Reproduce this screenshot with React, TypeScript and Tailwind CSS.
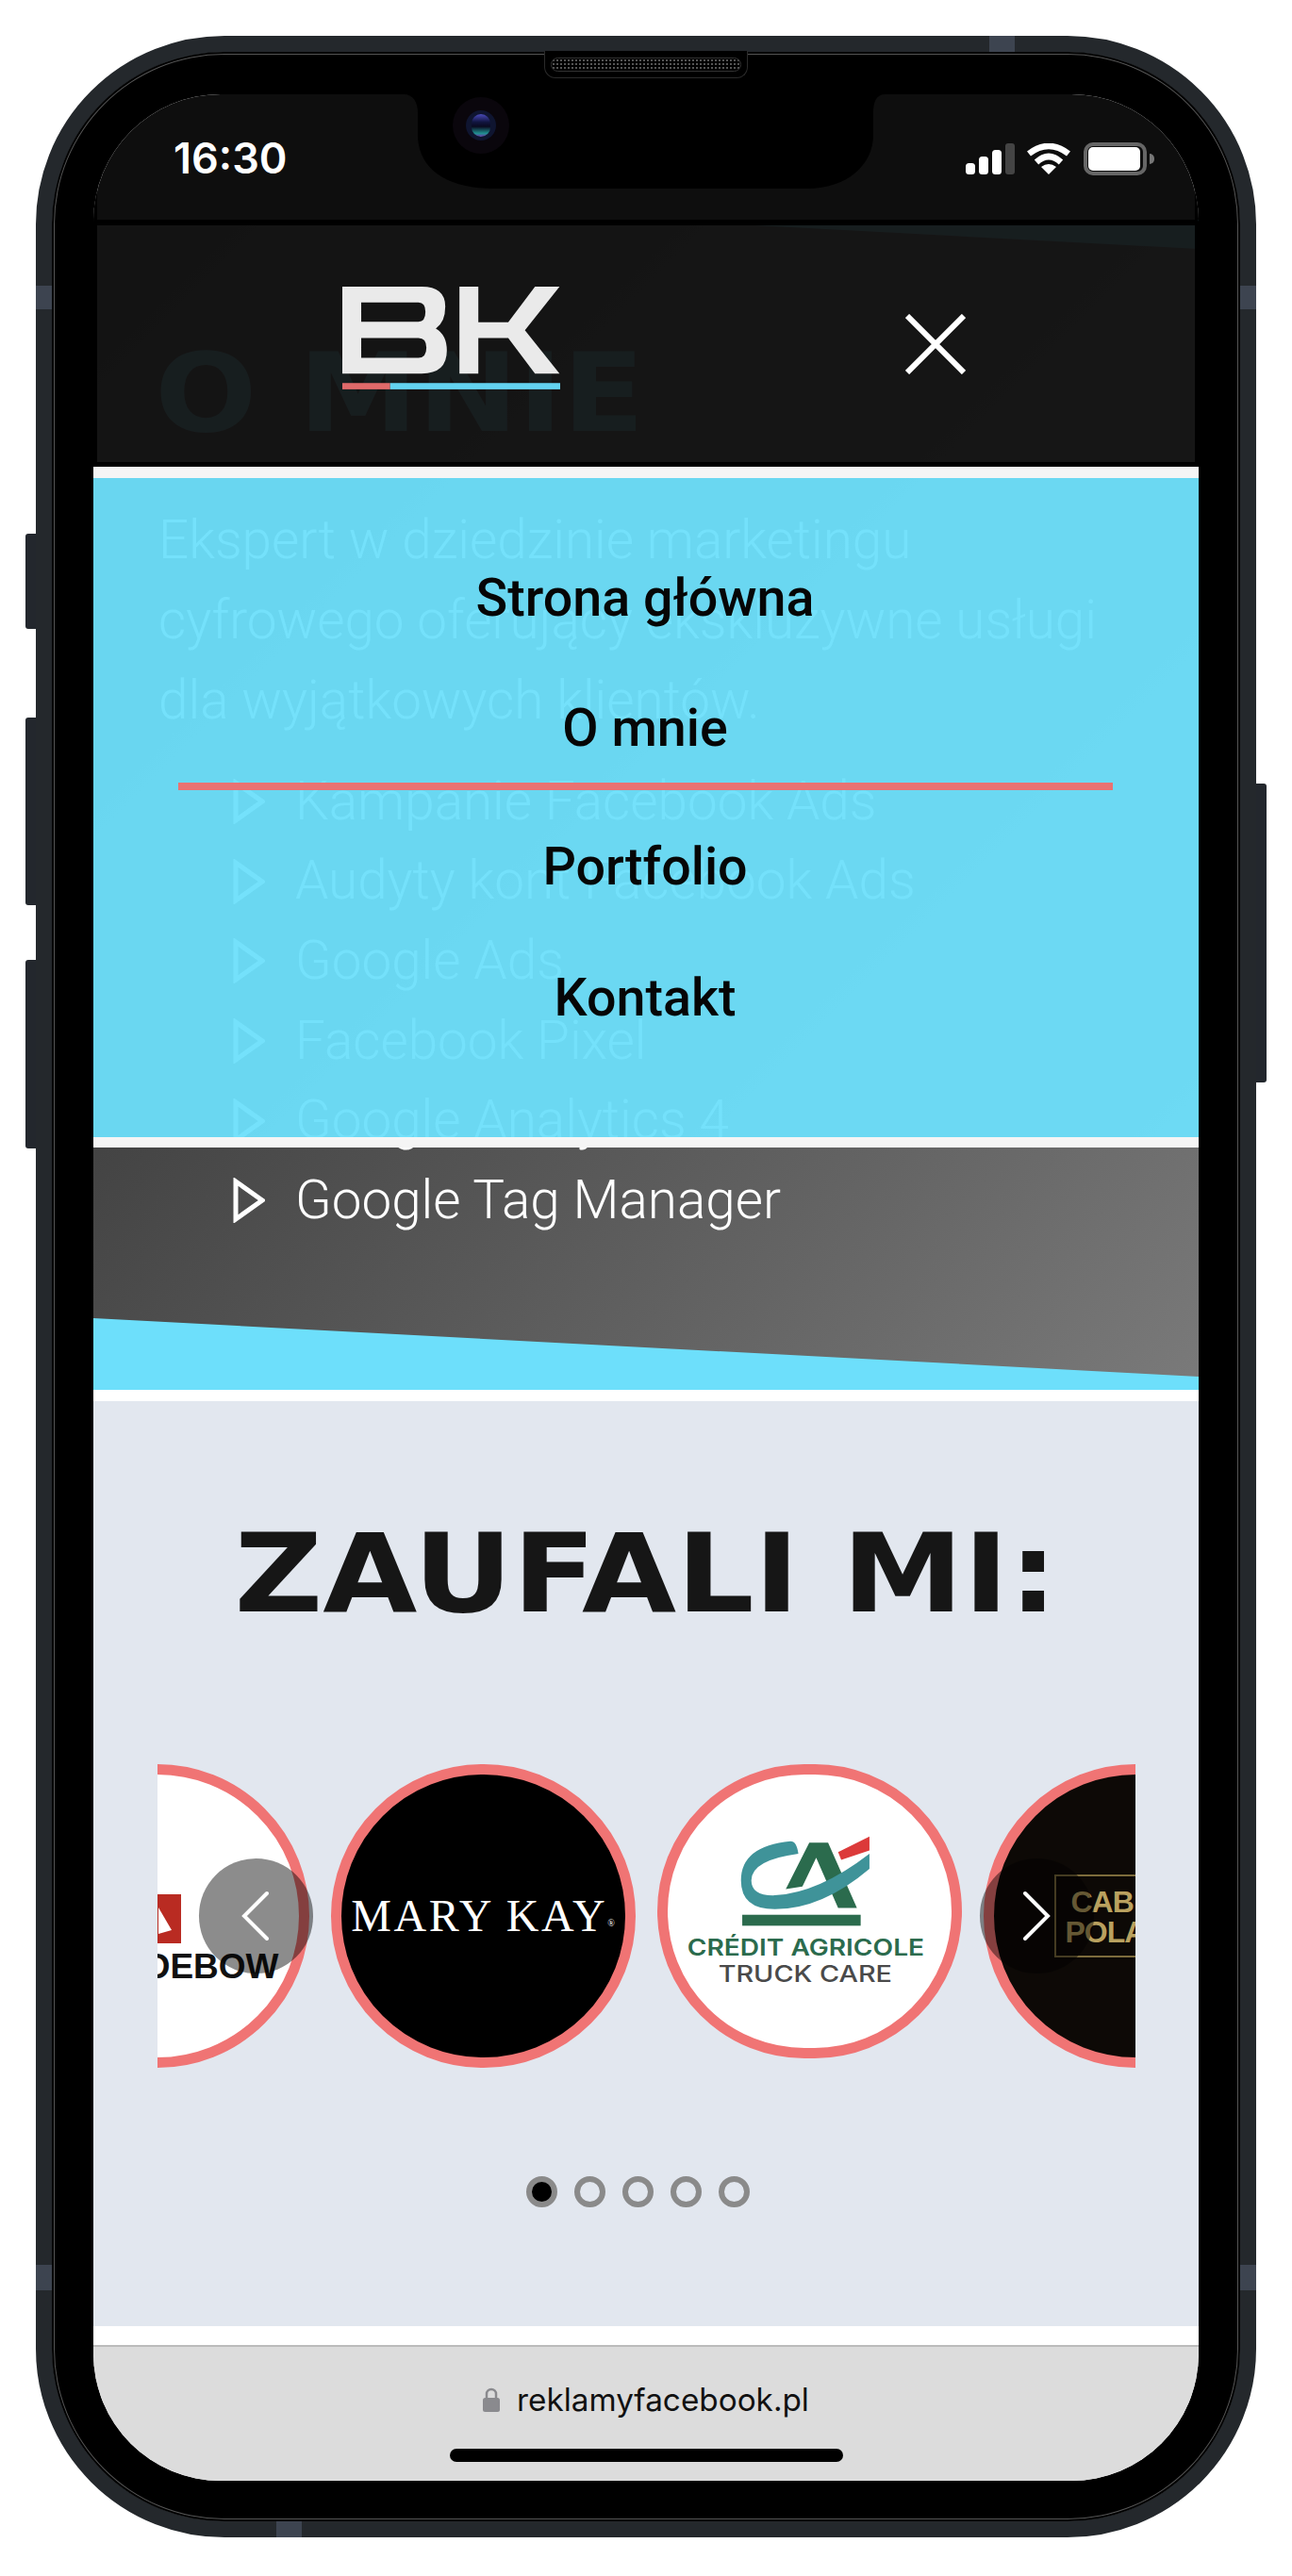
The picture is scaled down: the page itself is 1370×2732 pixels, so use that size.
const menuFont = "font-['Roboto',sans-serif]";

const listItems = [
  'Kampanie Facebook Ads',
  'Audyty kont Facebook Ads',
  'Google Ads',
  'Facebook Pixel',
  'Google Analytics 4',
  'Google Tag Manager',
];

function BkLogo() {
  return (
    <svg viewBox="68 72 692 326" className="w-[231px] h-[109px] shrink-0 mb-[12px]">
      <path
        fillRule="evenodd"
        fill="#eaeaea"
        d="M68 72H320Q395 72 395 135Q395 185 365 205Q400 225 400 275Q400 348 320 348H68ZM128 122V183H310Q332 183 332 152Q332 122 310 122ZM128 235V298H310Q335 298 335 266Q335 235 310 235Z"
      />
      <path fill="#eaeaea" d="M440 72H500V185H595L680 72H758L648 210L758 348H680L595 235H500V348H440Z" />
      <rect x="68" y="378" width="152" height="20" fill="#e06a6a" />
      <rect x="220" y="378" width="540" height="20" fill="#63d3f0" />
    </svg>
  );
}

function CaMark() {
  return (
    <svg viewBox="310 135 415 295" className="w-[138px] h-[98px] shrink-0">
      <path fill="#2b6b4d" d="M530 160H590L682 368H622L552 208L508 300L455 308Z" />
      <path
        fill="#3f9399"
        d="M470 155Q490 155 495 195Q345 215 345 280Q345 330 420 328Q560 320 722 195V243Q570 372 420 372Q312 372 312 280Q312 170 470 155Z"
      />
      <path fill="#dc3a3a" d="M622 190L722 140V185L632 215Z" />
      <rect x="316" y="390" width="378" height="35" fill="#2b6b4d" />
    </svg>
  );
}

function StatusIcons() {
  return (
    <div className="flex items-start h-[35px]">
      <svg viewBox="0 0 52 33" className="w-[52px] h-[33px] mt-[1px]">
        <rect x="0" y="21" width="10" height="12" rx="3.5" fill="#fff" />
        <rect x="14" y="14" width="10" height="19" rx="3.5" fill="#fff" />
        <rect x="28" y="7" width="10" height="26" rx="3.5" fill="#fff" />
        <rect x="42" y="0" width="10" height="33" rx="3" fill="#444" />
      </svg>
      <svg viewBox="0 0 46 33" className="w-[46px] h-[33px] ml-[13px] mt-[1px]">
        <path d="M2 11Q23 -5 44 11" fill="none" stroke="#fff" strokeWidth="6.5" />
        <path d="M10 20Q23 8 36 20" fill="none" stroke="#fff" strokeWidth="6.5" />
        <path d="M23 33L15 25Q23 19 31 25Z" fill="#fff" />
      </svg>
      <div className="ml-[14px] flex items-center">
        <div className="w-[67px] h-[35px] rounded-[10px] border-[4px] border-[#666] p-[1px]">
          <div className="w-[55px] h-full rounded-[5px] bg-white" />
        </div>
        <div className="w-[5px] h-[11px] rounded-r-[5px] bg-[#777] ml-[3px]" />
      </div>
    </div>
  );
}

function Chevron({ dir }: { dir: 'left' | 'right' }) {
  return (
    <svg viewBox="0 0 30 54" className="w-[30px] h-[54px]" fill="none" stroke="#fff" strokeWidth="4" strokeLinecap="round">
      <path d={dir === 'left' ? 'M27 3L3 27L27 51' : 'M3 3L27 27L3 51'} />
    </svg>
  );
}

export default function App() {
  return (
    <div className="w-[1370px] h-[2732px] bg-white pt-[38px] flex justify-center overflow-hidden">
      {/* phone body */}
      <div className="relative w-[1294px] h-[2653px] rounded-[200px] border-[17px] border-[#24282c] bg-black pt-[45px] px-[44px] pb-[43px] shadow-[inset_0_0_0_2px_#000,inset_0_0_0_3px_#555]">
        {/* side buttons */}
        <div className="absolute left-[-28px] top-[511px] w-[11px] h-[101px] rounded-l-[3px] bg-[#23272d]" />
        <div className="absolute left-[-28px] top-[706px] w-[11px] h-[199px] rounded-l-[3px] bg-[#23272d]" />
        <div className="absolute left-[-28px] top-[963px] w-[11px] h-[200px] rounded-l-[3px] bg-[#23272d]" />
        <div className="absolute right-[-28px] top-[776px] w-[11px] h-[317px] rounded-r-[3px] bg-[#23272d]" />
        {/* antenna bands */}
        <div className="absolute top-[-17px] left-[994px] w-[27px] h-[17px] bg-[#3d4450]" />
        <div className="absolute bottom-[-17px] left-[238px] w-[27px] h-[17px] bg-[#3d4450]" />
        <div className="absolute left-[-17px] top-[248px] w-[17px] h-[25px] bg-[#3d4450]" />
        <div className="absolute right-[-17px] top-[248px] w-[17px] h-[25px] bg-[#3d4450]" />
        <div className="absolute left-[-17px] top-[2347px] w-[17px] h-[27px] bg-[#3d4450]" />
        <div className="absolute right-[-17px] top-[2347px] w-[17px] h-[27px] bg-[#3d4450]" />
        {/* speaker */}
        <div className="absolute top-[-1px] left-[522px] w-[216px] h-[29px] rounded-b-[12px] bg-black border border-t-0 border-[#2a2a2a] flex justify-center pt-[7px]">
          <div className="w-[202px] h-[15px] rounded-full border border-[#333] bg-[radial-gradient(#555_1px,transparent_1px)] bg-[length:4px_4px]" />
        </div>

        {/* screen */}
        <div className="relative w-full h-full rounded-[135px] overflow-hidden bg-white">
          {/* status bar */}
          <div className="relative h-[133px] bg-[#0e0e0e] border-x-[4px] border-black flex items-start justify-between pt-[51px] pl-[81px] pr-[43px]">
            <span className="font-['Inter',sans-serif] font-semibold text-[45px] leading-[34px] h-[34px] text-white">16:30</span>
            <StatusIcons />
          </div>
          {/* notch */}
          <svg viewBox="0 0 511 100" className="absolute top-0 left-[329px] w-[511px] h-[100px] z-30">
            <path d="M0 0C10 0 15 8 15 20V43C15 75 40 100 96 100H428C470 100 498 75 498 43V20C498 8 501 0 511 0Z" fill="#000" />
          </svg>
          <div className="absolute top-[3px] left-[381px] w-[60px] h-[60px] rounded-full bg-[#0a060c] flex items-center justify-center z-30">
            <div className="w-[32px] h-[32px] rounded-full bg-[#0f1530] flex items-center justify-center">
              <div className="w-[20px] h-[24px] rounded-full bg-[linear-gradient(180deg,#4a4ab8_0%,#111540_35%,#0a0a20_55%,#1f8f8f_85%,#6a3aa8_100%)]" />
            </div>
          </div>

          {/* about section */}
          <section className="relative h-[1241px] bg-[#6ddffb]">
            <div className="absolute inset-0 bg-[linear-gradient(135deg,#1e1e1e,#7a7a7a)] [clip-path:polygon(0_0,586px_0,100%_31px,100%_1227px,0_1165px)]" />
            <div className="relative pt-[142px] text-white font-['Roboto',sans-serif] font-light">
              <h2 className="pl-[59px] h-[85px] origin-left scale-x-[1.105] font-['DejaVu_Sans',sans-serif] font-bold text-[115px] leading-[85px] text-[#6ddffb]">O MNIE</h2>
              <p className="mt-[70px] pl-[69px] text-[56.6px] leading-[85px]">
                Ekspert w dziedzinie marketingu
                <br />
                cyfrowego oferujący ekskluzywne usługi
                <br />
                dla wyjątkowych klientów.
              </p>
              <ul className="mt-[23px] pl-[148px]">
                {listItems.map((item) => (
                  <li key={item} className="flex items-center gap-[32px] h-[84.6px] text-[56.6px]">
                    <svg viewBox="0 0 34 48" className="w-[34px] h-[48px] shrink-0" fill="none" stroke="#fff" strokeWidth="5">
                      <path d="M3 4L31 24L3 44Z" />
                    </svg>
                    {item}
                  </li>
                ))}
              </ul>
            </div>
          </section>

          <div className="h-[12px] bg-white" />

          {/* clients */}
          <section className="h-[981px] bg-[#e2e7ef] flex flex-col items-center pt-[141px]">
            <h2 className="h-[84px] scale-x-[1.125] font-['DejaVu_Sans',sans-serif] font-bold text-[115px] leading-[84px] text-[#161616] whitespace-nowrap">ZAUFALI MI:</h2>
            <div className="relative w-[1037px] h-[322px] mt-[160px] shrink-0">
              <div className="w-full h-full overflow-hidden flex items-start gap-[23px]">
                <div className="relative shrink-0 ml-[-162px] w-[323px] h-[322px] rounded-full border-[11px] border-[#f07474] bg-white overflow-hidden flex flex-col items-end justify-center pr-[21px] pt-[46px]">
                  <svg viewBox="0 0 48 52" className="w-[48px] h-[52px] mr-[104px]">
                    <path fill="#b92b22" d="M0 0H48V52H0Z" />
                    <path fill="#fff" d="M24 14L38 38L24 42Z" />
                  </svg>
                  <span className="mt-[10px] font-['Liberation_Sans',sans-serif] font-bold text-[37px] leading-[30px] text-[#111]">RADEBOW</span>
                </div>
                <div className="shrink-0 w-[323px] h-[322px] rounded-full border-[11px] border-[#f07474] bg-black flex items-center justify-center">
                  <span className="font-['Liberation_Serif',serif] text-[48px] leading-none tracking-[2.6px] text-white whitespace-nowrap">
                    MARY KAY<sup className="text-[10px] tracking-normal">®</sup>
                  </span>
                </div>
                <div className="shrink-0 w-[323px] h-[312px] rounded-full border-[11px] border-[#f07474] bg-white flex flex-col items-center pt-[64px] pr-[8px]">
                  <CaMark />
                  <span className="mt-[9px] scale-x-[1.17] font-['Inter',sans-serif] font-semibold text-[24px] leading-[26px] text-[#2b6b4d] whitespace-nowrap">CRÉDIT AGRICOLE</span>
                  <span className="mt-[2px] scale-x-[1.2] font-['Inter',sans-serif] font-medium text-[24px] leading-[26px] text-[#4a4a4a] whitespace-nowrap">TRUCK CARE</span>
                </div>
                <div className="shrink-0 w-[323px] h-[322px] rounded-full border-[11px] border-[#f07474] bg-[#0d0906] flex items-center pl-[64px]">
                  <div className="w-[200px] h-[88px] border-2 border-[#7d6c3c] pl-[10px] pt-[11px] font-['Liberation_Sans',sans-serif] font-bold text-[32px] leading-[32px] tracking-[-1px] text-[#b9a15f]">
                    <span className="pl-[6px]">CAB</span>
                    <br />
                    POLA
                  </div>
                </div>
              </div>
              <button className="absolute left-[44px] top-[100px] w-[121px] h-[122px] rounded-full bg-black/45 flex items-center justify-center">
                <Chevron dir="left" />
              </button>
              <button className="absolute left-[872px] top-[100px] w-[121px] h-[122px] rounded-full bg-black/45 flex items-center justify-center">
                <Chevron dir="right" />
              </button>
            </div>
            <div className="mt-[115px] flex gap-[18px] pr-[18px]">
              <div className="w-[33px] h-[33px] rounded-full border-[6px] border-[#8a8a8a] bg-black" />
              <div className="w-[33px] h-[33px] rounded-full border-[6px] border-[#8a8a8a]" />
              <div className="w-[33px] h-[33px] rounded-full border-[6px] border-[#8a8a8a]" />
              <div className="w-[33px] h-[33px] rounded-full border-[6px] border-[#8a8a8a]" />
              <div className="w-[33px] h-[33px] rounded-full border-[6px] border-[#8a8a8a]" />
            </div>
          </section>

          <div className="h-[20px] bg-white" />

          {/* browser address bar */}
          <div className="h-[144px] bg-[#dcdcdc] border-t-2 border-[#bbb] flex flex-col items-center pt-[38px]">
            <div className="flex items-center gap-[18px] h-[36px]">
              <svg viewBox="0 0 18 26" className="w-[18px] h-[26px]">
                <path d="M4 11V7a5 5 0 0 1 10 0v4" fill="none" stroke="#8a8a8e" strokeWidth="2.5" />
                <rect x="0" y="11" width="18" height="15" rx="2.5" fill="#8a8a8e" />
              </svg>
              <span className="font-['Inter',sans-serif] text-[33.3px] leading-[36px] text-[#111]">reklamyfacebook.pl</span>
            </div>
            <div className="mt-[34px] w-[417px] h-[14px] rounded-full bg-black" />
          </div>

          {/* open menu, lies over the page */}
          <div className="absolute left-0 right-0 top-[133px] z-20">
            <div className="h-[6px] bg-black" />
            <div className="h-[251px] border-x-[4px] border-black bg-[#131313]/95 flex items-center pl-[260px]">
              <BkLogo />
              <svg viewBox="0 0 64 64" className="ml-[366px] w-[64px] h-[64px]" stroke="#fff" strokeWidth="6">
                <path d="M2 2L62 62M62 2L2 62" />
              </svg>
            </div>
            <div className="h-[5px] bg-black" />
            <div className="h-[12px] bg-[#f5f5f5]" />
            <nav className={`h-[699px] bg-[#6ddffb]/95 flex flex-col items-center pt-[58px] pr-[2px] ${menuFont} font-medium text-[55.6px] text-[#060606]`}>
              <a className="h-[139px] flex items-center">Strona główna</a>
              <a className="h-[134px] w-[991px] pt-[12px] border-b-8 border-[#e97272] flex items-center justify-center">O mnie</a>
              <a className="mt-[12px] h-[139px] flex items-center">Portfolio</a>
              <a className="h-[139px] flex items-center">Kontakt</a>
            </nav>
            <div className="h-[11px] bg-[#f5f5f5]" />
          </div>
        </div>
      </div>
    </div>
  );
}
